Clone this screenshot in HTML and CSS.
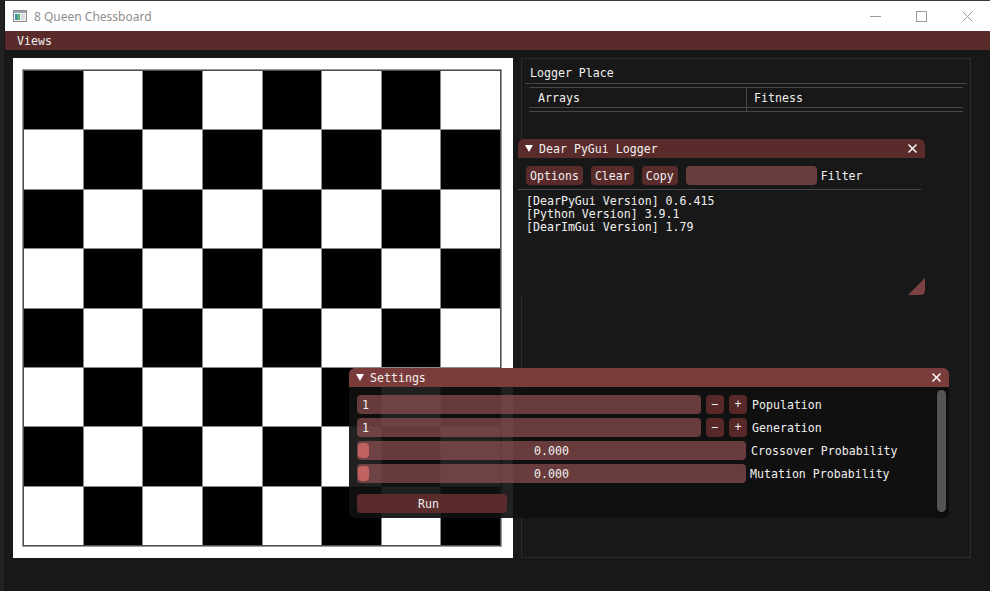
FILE: index.html
```html
<!DOCTYPE html>
<html>
<head>
<meta charset="utf-8">
<title>8 Queen Chessboard</title>
<link rel="stylesheet" href="styles.css">
</head>
<body>
<div class="app">
  <div class="behind"></div>
  <div class="win">
    <div class="titlebar">
      <svg class="appicon" width="14" height="12" viewBox="0 0 14 12">
        <rect x="0.5" y="0.5" width="13" height="11" fill="#f4f4f4" stroke="#8a8a8a"/>
        <rect x="1" y="1" width="12" height="2" fill="#9aa6b0"/>
        <rect x="2" y="4" width="5" height="6" fill="#3f8fa8"/>
        <rect x="4" y="4" width="3" height="6" fill="#5db37a"/>
        <rect x="8" y="4" width="4" height="6" fill="#d8dde2"/>
      </svg>
      <span class="title">8 Queen Chessboard</span>
      <div class="controls">
        <div class="ctl"><svg width="11" height="11" viewBox="0 0 11 11"><line x1="0" y1="5.5" x2="11" y2="5.5" stroke="#9a9a9a" stroke-width="1"/></svg></div>
        <div class="ctl"><svg width="11" height="11" viewBox="0 0 11 11"><rect x="0.5" y="0.5" width="10" height="10" fill="none" stroke="#9a9a9a" stroke-width="1"/></svg></div>
        <div class="ctl"><svg width="11" height="11" viewBox="0 0 11 11"><line x1="0.5" y1="0.5" x2="10.5" y2="10.5" stroke="#9a9a9a" stroke-width="1"/><line x1="10.5" y1="0.5" x2="0.5" y2="10.5" stroke="#9a9a9a" stroke-width="1"/></svg></div>
      </div>
    </div>
    <div class="menubar"><span class="menu-item">Views</span></div>
    <div class="content">
      <div class="frame">
        <div class="board">
          <div class="b"></div><div class="w"></div><div class="b"></div><div class="w"></div><div class="b"></div><div class="w"></div><div class="b"></div><div class="w"></div>
          <div class="w"></div><div class="b"></div><div class="w"></div><div class="b"></div><div class="w"></div><div class="b"></div><div class="w"></div><div class="b"></div>
          <div class="b"></div><div class="w"></div><div class="b"></div><div class="w"></div><div class="b"></div><div class="w"></div><div class="b"></div><div class="w"></div>
          <div class="w"></div><div class="b"></div><div class="w"></div><div class="b"></div><div class="w"></div><div class="b"></div><div class="w"></div><div class="b"></div>
          <div class="b"></div><div class="w"></div><div class="b"></div><div class="w"></div><div class="b"></div><div class="w"></div><div class="b"></div><div class="w"></div>
          <div class="w"></div><div class="b"></div><div class="w"></div><div class="b"></div><div class="w"></div><div class="b"></div><div class="w"></div><div class="b"></div>
          <div class="b"></div><div class="w"></div><div class="b"></div><div class="w"></div><div class="b"></div><div class="w"></div><div class="b"></div><div class="w"></div>
          <div class="w"></div><div class="b"></div><div class="w"></div><div class="b"></div><div class="w"></div><div class="b"></div><div class="w"></div><div class="b"></div>
        </div>
      </div>
      <div class="place">
        <div class="place-title">Logger Place</div>
        <div class="place-sep"></div>
        <div class="table">
          <div class="trow thead">
            <div class="th">Arrays</div>
            <div class="th th2">Fitness</div>
          </div>
          <div class="trow tgap">
            <div class="td"></div>
            <div class="td th2"></div>
          </div>
        </div>
      </div>
    </div>
  </div>
</div>

<div class="logger">
  <div class="wtitle lg-title">
    <svg class="tri" width="8" height="7" viewBox="0 0 8 7"><polygon points="0,0 8,0 4,7" fill="#ffffff"/></svg>
    <span class="wname">Dear PyGui Logger</span>
    <svg class="xclose" width="9" height="9" viewBox="0 0 9 9"><line x1="0.5" y1="0.5" x2="8.5" y2="8.5" stroke="#fff" stroke-width="1.4"/><line x1="8.5" y1="0.5" x2="0.5" y2="8.5" stroke="#fff" stroke-width="1.4"/></svg>
  </div>
  <div class="lg-body">
    <div class="lg-tools">
      <div class="btn">Options</div>
      <div class="btn">Clear</div>
      <div class="btn">Copy</div>
      <div class="filter-input"></div>
      <span class="lbl">Filter</span>
    </div>
    <div class="lg-sep"></div>
    <div class="lg-log">
      <div>[DearPyGui Version] 0.6.415</div>
      <div>[Python Version] 3.9.1</div>
      <div>[DearImGui Version] 1.79</div>
    </div>
    <svg class="grip" width="17" height="17" viewBox="0 0 17 17"><path d="M17 0 L17 12 Q17 17 12 17 L0 17 Z" fill="#7a4242"/></svg>
  </div>
</div>

<div class="settings">
  <div class="wtitle st-title">
    <svg class="tri" width="8" height="7" viewBox="0 0 8 7"><polygon points="0,0 8,0 4,7" fill="#ffffff"/></svg>
    <span class="wname">Settings</span>
    <svg class="xclose" width="9" height="9" viewBox="0 0 9 9"><line x1="0.5" y1="0.5" x2="8.5" y2="8.5" stroke="#fff" stroke-width="1.4"/><line x1="8.5" y1="0.5" x2="0.5" y2="8.5" stroke="#fff" stroke-width="1.4"/></svg>
  </div>
  <div class="st-body">
    <div class="st-rows">
      <div class="st-row">
        <div class="field int-field">1</div>
        <div class="sbtn">&minus;</div>
        <div class="sbtn">+</div>
        <span class="lbl">Population</span>
      </div>
      <div class="st-row">
        <div class="field int-field">1</div>
        <div class="sbtn">&minus;</div>
        <div class="sbtn">+</div>
        <span class="lbl">Generation</span>
      </div>
      <div class="st-row">
        <div class="field slider"><div class="grab"></div><span class="sval">0.000</span></div>
        <span class="lbl">Crossover Probability</span>
      </div>
      <div class="st-row">
        <div class="field slider"><div class="grab"></div><span class="sval">0.000</span></div>
        <span class="lbl lbl-tight">Mutation Probability</span>
      </div>
    </div>
    <div class="run">Run</div>
    <div class="scrollbar"><div class="thumb"></div></div>
  </div>
</div>
</body>
</html>
```

FILE: styles.css
```css
* { box-sizing: border-box; }

html, body {
  margin: 0;
  padding: 0;
  width: 990px;
  height: 591px;
  overflow: hidden;
  background: #181818;
  font-family: "DejaVu Sans Mono", "Liberation Mono", monospace;
  font-size: 11.6px;
  color: #f0f0f0;
}

.app {
  display: flex;
  height: 591px;
}

.behind {
  width: 5px;
  background: #222;
  border-right: 1px solid #151515;
}

.win {
  flex: 1;
  display: flex;
  flex-direction: column;
  background: #181818;
}

.titlebar {
  height: 31px;
  background: #ffffff;
  border-top: 1px solid #3c3c3c;
  display: flex;
  align-items: center;
  padding-left: 8px;
}

.appicon { display: block; }

.title {
  font-family: "Noto Sans", "Open Sans", sans-serif;
  font-size: 12px;
  color: #8e8e8e;
  margin-left: 7px;
  margin-top: 1px;
}

.controls {
  margin-left: auto;
  display: flex;
  height: 100%;
}

.ctl {
  width: 46px;
  display: flex;
  align-items: center;
  justify-content: center;
}
.ctl svg { display: block; }

.menubar {
  height: 19px;
  background: #5a2b2b;
  display: flex;
  align-items: center;
  padding-left: 12px;
}

.menu-item {
  line-height: 13px;
  padding-top: 1px;
}

.content {
  flex: 1;
  display: flex;
  align-items: flex-start;
  gap: 8px;
  padding: 8px 0 0 8px;
}

.frame {
  width: 500px;
  height: 500px;
  background: #ffffff;
  padding: 12px 0 0 10px;
}

.board {
  width: 478px;
  height: 476px;
  display: grid;
  grid-template-columns: repeat(8, 1fr);
  grid-template-rows: repeat(8, 1fr);
  gap: 1px;
  background: #8a8a8a;
  border: 1px solid #4a4a4a;
  box-shadow: 0 0 0 1px #9a9a9a;
}

.b { background: #000000; }
.w { background: #ffffff; }

.place {
  width: 450px;
  height: 500px;
  border: 1px solid #2c2c2c;
  padding: 8px 7px 0 7px;
}

.place-title {
  line-height: 13px;
  padding-left: 1px;
}

.place-sep {
  height: 1px;
  background: #434343;
  margin: 3px -4px 0 -4px;
}

.table {
  margin-top: 3px;
  border-top: 1px solid #474747;
}

.trow {
  display: grid;
  grid-template-columns: 217px 1fr;
}

.thead {
  height: 20px;
  border-bottom: 1px solid #474747;
}

.th {
  line-height: 21px;
  padding-left: 9px;
}

.th2 {
  border-left: 1px solid #4a4a4a;
  padding-left: 7px;
}

.tgap {
  height: 4px;
  border-bottom: 1px solid #474747;
}

/* floating windows */
.wtitle {
  height: 19px;
  display: flex;
  align-items: center;
  padding: 0 8px 0 7px;
  border-radius: 6px 6px 0 0;
}

.tri { display: block; }

.wname {
  margin-left: 6px;
  line-height: 13px;
  padding-top: 2px;
}

.xclose {
  display: block;
  margin-left: auto;
}

.logger {
  position: absolute;
  left: 518px;
  top: 139px;
  width: 407px;
  height: 156px;
  display: flex;
  flex-direction: column;
}

.lg-title { background: #5a2b2b; }

.lg-body {
  position: relative;
  flex: 1;
  background: #181818;
  padding: 8px 8px 0 8px;
}

.lg-tools {
  display: flex;
  align-items: center;
  gap: 8px;
  height: 19px;
}

.btn {
  height: 19px;
  line-height: 20px;
  padding: 0 4px;
  background: #5a2b2b;
  border-radius: 4px;
}

.filter-input {
  width: 131px;
  height: 19px;
  background: #6b3e3e;
  border-radius: 4px;
}

.lg-tools .lbl {
  margin-left: -4px;
  padding-top: 1px;
}

.lg-sep {
  height: 1px;
  background: #474747;
  margin: 4px -4px 0 -8px;
}

.lg-log {
  margin-top: 5px;
  line-height: 13px;
}

.grip {
  position: absolute;
  right: 0;
  bottom: 0;
  display: block;
}

.settings {
  position: absolute;
  left: 349px;
  top: 368px;
  width: 600px;
  height: 150px;
  display: flex;
  flex-direction: column;
}

.st-title { background: #7a3b3b; }

.st-body {
  position: relative;
  flex: 1;
  background: rgba(16, 16, 16, 0.93);
  border-radius: 0 0 6px 6px;
  padding: 8px 0 0 8px;
}

.st-rows {
  display: flex;
  flex-direction: column;
  gap: 4px;
}

.st-row {
  display: flex;
  align-items: center;
  gap: 5px;
  height: 19px;
}

.st-row .lbl { padding-top: 1px; }

.field {
  height: 19px;
  background: rgba(176, 96, 96, 0.55);
  border-radius: 4px;
  line-height: 20px;
}

.int-field {
  width: 344px;
  padding-left: 5px;
}

.sbtn {
  width: 18px;
  height: 19px;
  line-height: 19px;
  text-align: center;
  background: rgba(120, 50, 50, 0.7);
  border-radius: 4px;
}

.slider {
  position: relative;
  width: 389px;
  text-align: center;
}

.grab {
  position: absolute;
  left: 1px;
  top: 2px;
  width: 11px;
  height: 15px;
  background: #c06262;
  border-radius: 4px;
}

.sval { position: relative; }

.lbl-tight { margin-left: -1px; }

.run {
  width: 150px;
  height: 19px;
  line-height: 20px;
  margin-top: 11px;
  text-align: center;
  padding-right: 7px;
  background: #5a2b2b;
  border-radius: 4px;
}

.scrollbar {
  position: absolute;
  right: 1px;
  top: 1px;
  bottom: 0;
  width: 13px;
  background: #0c0c0c;
  border-radius: 0 0 6px 0;
  padding: 2px 2px;
}

.thumb {
  height: 122px;
  background: #545454;
  border-radius: 5px;
}
```
